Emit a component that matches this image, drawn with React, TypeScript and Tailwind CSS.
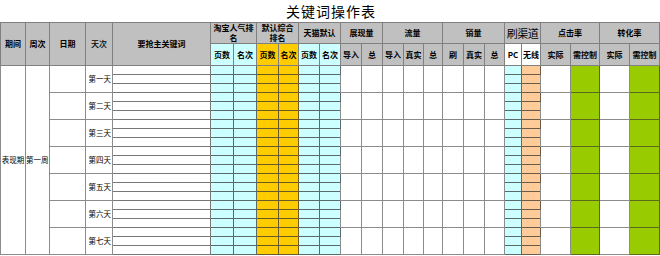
import React from 'react';

const cols = [25, 24, 36, 27, 98, 23, 23, 22, 20, 21, 21, 21, 21, 21, 20, 19, 21, 21, 20, 17, 19, 30, 29, 30, 30];
const days = ['第一天', '第二天', '第三天', '第四天', '第五天', '第六天', '第七天'];

const H = 'border border-[#808080] bg-[#c0c0c0] p-0 text-center align-middle font-bold text-[8px] leading-[10px] text-black whitespace-nowrap';
const W = 'border border-[#8c8c8c] bg-white p-0';
const CY = 'border border-[#5a6a6a] bg-[#ccffff] p-0';
const GO = 'border border-[#6a5a2a] bg-[#ffcc00] p-0';
const PE = 'border border-[#6a5a4a] bg-[#ffcc99] p-0';
const GR = 'border border-[#5a6a1a] bg-[#99cc00] p-0';

export default function App() {
  const rows: React.ReactNode[] = [];
  days.forEach((day, d) => {
    for (let s = 0; s < 3; s++) {
      rows.push(
        <tr key={`${d}-${s}`} className="h-[9px]">
          {d === 0 && s === 0 && (
            <>
              <td rowSpan={21} className={`${W} text-[7.5px] text-center align-middle leading-none whitespace-nowrap`}>表现期</td>
              <td rowSpan={21} className={`${W} text-[7.5px] text-left align-middle leading-none whitespace-nowrap`}>第一周</td>
            </>
          )}
          {s === 0 && (
            <>
              <td rowSpan={3} className={W}></td>
              <td rowSpan={3} className={`${W} text-[7.5px] text-right align-middle leading-none pr-[1px] whitespace-nowrap`}>{day}</td>
            </>
          )}
          <td className="border border-[#777] bg-white p-0"></td>
          <td className={CY}></td>
          <td className={CY}></td>
          <td className={GO}></td>
          <td className={GO}></td>
          <td className={CY}></td>
          <td className={CY}></td>
          {s === 0 && (
            <>
              <td rowSpan={3} className={W}></td>
              <td rowSpan={3} className={W}></td>
              <td rowSpan={3} className={W}></td>
              <td rowSpan={3} className={W}></td>
              <td rowSpan={3} className={W}></td>
              <td rowSpan={3} className={W}></td>
              <td rowSpan={3} className={W}></td>
              <td rowSpan={3} className={W}></td>
            </>
          )}
          <td className={CY}></td>
          <td className={PE}></td>
          {s === 0 && (
            <>
              <td rowSpan={3} className={W}></td>
              <td rowSpan={3} className={GR}></td>
              <td rowSpan={3} className={W}></td>
              <td rowSpan={3} className={GR}></td>
            </>
          )}
        </tr>
      );
    }
  });

  return (
    <div className="w-[660px] h-[256px] bg-white overflow-hidden font-['Noto_Sans_CJK_SC','Noto_Sans',sans-serif] text-black">
      <div className="h-[22px] flex items-center justify-center text-[14px] leading-none tracking-[1px] pl-[2px]">关键词操作表</div>
      <table className="border-collapse table-fixed w-[659px]">
        <colgroup>
          {cols.map((w, i) => (
            <col key={i} style={{ width: w }} />
          ))}
        </colgroup>
        <thead>
          <tr className="h-[21px]">
            <th rowSpan={2} className={H}>期间</th>
            <th rowSpan={2} className={H}>周次</th>
            <th rowSpan={2} className={H}>日期</th>
            <th rowSpan={2} className={`${H} font-medium`}>天次</th>
            <th rowSpan={2} className={H}>要抢主关键词</th>
            <th colSpan={2} className={H}>淘宝人气排<br />名</th>
            <th colSpan={2} className={H}>默认综合<br />排名</th>
            <th colSpan={2} className={H}>天猫默认</th>
            <th colSpan={2} className={H}>展现量</th>
            <th colSpan={3} className={H}>流量</th>
            <th colSpan={3} className={H}>销量</th>
            <th colSpan={2} className={`${H} text-[11px] font-normal text-[#333] tracking-[-0.5px]`}>刷渠道</th>
            <th colSpan={2} className={H}>点击率</th>
            <th colSpan={2} className={H}>转化率</th>
          </tr>
          <tr className="h-[22px]">
            <th className={`${H} bg-[#ccffff] text-[#0000ff]`}>页数</th>
            <th className={`${H} bg-[#ccffff] text-[#0000ff]`}>名次</th>
            <th className={`${H} bg-[#ffcc00] text-[#0000ff]`}>页数</th>
            <th className={`${H} bg-[#ffcc00] text-[#0000ff]`}>名次</th>
            <th className={`${H} bg-[#ccffff] text-[#0000ff]`}>页数</th>
            <th className={`${H} bg-[#ccffff] text-[#0000ff]`}>名次</th>
            <th className={H}>导入</th>
            <th className={H}>总</th>
            <th className={H}>导入</th>
            <th className={H}>真实</th>
            <th className={H}>总</th>
            <th className={H}>刷</th>
            <th className={H}>真实</th>
            <th className={H}>总</th>
            <th className={`${H} bg-white text-[#0000ff]`}>PC</th>
            <th className={`${H} bg-white text-[#0000ff]`}>无线</th>
            <th className={H}>实际</th>
            <th className={H}>需控制</th>
            <th className={H}>实际</th>
            <th className={H}>需控制</th>
          </tr>
        </thead>
        <tbody>{rows}</tbody>
      </table>
    </div>
  );
}
